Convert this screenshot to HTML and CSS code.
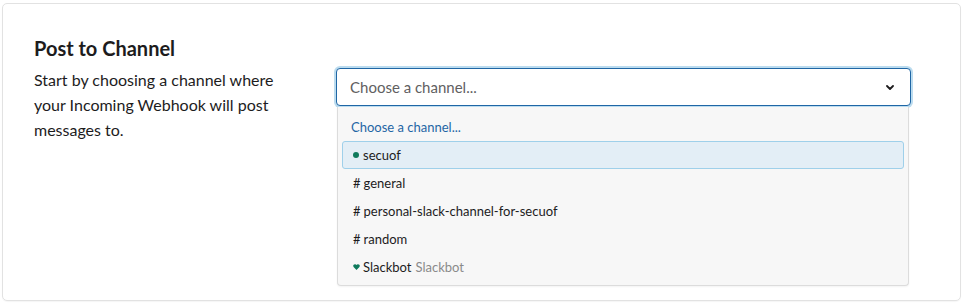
FILE: index.html
```html
<!DOCTYPE html>
<html lang="en">
<head>
  <meta charset="UTF-8">
  <title>Post to Channel</title>
  <link rel="stylesheet" href="styles.css">
</head>
<body>
  <div class="card">
    <div class="row">
      <div class="label-col">
        <h2>Post to Channel</h2>
        <p class="help">Start by choosing a channel where your Incoming Webhook will post messages to.</p>
      </div>

      <div class="select-col">
        <div class="select">
          <span class="placeholder">Choose a channel...</span>
          <svg class="chevron" width="8" height="5" viewBox="0 0 8 5">
            <path d="M1 1 L4 4 L7 1" fill="none" stroke="#1d1c1d" stroke-width="1.8" stroke-linecap="round" stroke-linejoin="round"/>
          </svg>
        </div>

        <ul class="menu">
          <li class="option prompt">Choose a channel...</li>
          <li class="option active"><span class="dot"></span>secuof</li>
          <li class="option"><span class="hash">#</span>general</li>
          <li class="option"><span class="hash">#</span>personal-slack-channel-for-secuof</li>
          <li class="option"><span class="hash">#</span>random</li>
          <li class="option">
            <svg class="heart" width="7" height="6" viewBox="0 0 8 7">
              <path d="M4 7 L0.6 3.4 A1.9 1.9 0 0 1 4 1.2 A1.9 1.9 0 0 1 7.4 3.4 Z" fill="#0f7a5c"/>
            </svg>Slackbot <span class="muted">Slackbot</span>
          </li>
        </ul>
      </div>
    </div>
  </div>
</body>
</html>
```

FILE: styles.css
```css
* {
  margin: 0;
  padding: 0;
  box-sizing: border-box;
}

body {
  font-family: Lato, 'Noto Sans', sans-serif;
  background: #fff;
  color: #1d1c1d;
  padding: 3px 7px 3px 2px;
}

.card {
  height: 298px;
  border: 1px solid #e2e2e2;
  border-radius: 5px;
  box-shadow: 0 1px 1px rgba(0, 0, 0, 0.04);
  padding: 32px 49px 0 31px;
}

.row {
  display: flex;
}

.label-col {
  width: 302px;
  flex-shrink: 0;
}

h2 {
  font-size: 20px;
  font-weight: 700;
  line-height: 24px;
  margin-bottom: 7px;
}

.help {
  font-size: 16px;
  line-height: 25px;
  width: 260px;
}

.select-col {
  flex: 1;
  padding-top: 32px;
}

.select {
  height: 38px;
  border: 1px solid #1f66a5;
  border-radius: 4px;
  box-shadow: 0 0 0 2px #bcdcef;
  display: flex;
  align-items: center;
  justify-content: space-between;
  padding: 0 16px 0 13px;
  background: #fff;
}

.placeholder {
  font-size: 15px;
  color: #616061;
}

.chevron {
  display: block;
}

.menu {
  list-style: none;
  margin: 1px 2px 0 1px;
  background: #f7f7f7;
  border: 1px solid #dcdcdc;
  border-top: none;
  border-radius: 0 0 4px 4px;
  padding: 6px 4px 4px;
  box-shadow: 0 1px 2px rgba(0, 0, 0, 0.05);
}

.option {
  font-size: 13px;
  height: 28px;
  line-height: 26px;
  padding: 0 11px 0 10px;
  border: 1px solid transparent;
  border-radius: 3px;
  display: flex;
  align-items: center;
}

.option.prompt {
  color: #1f66a5;
  padding-left: 8px;
}

.option.active {
  background: #e3eef6;
  border-color: #9fd0ea;
}

.dot {
  width: 6px;
  height: 6px;
  border-radius: 50%;
  background: #0f7a5c;
  margin-right: 4px;
}

.hash {
  margin-right: 3px;
}

.heart {
  margin-right: 3px;
}

.muted {
  color: #8a8a8a;
  margin-left: 4px;
}
```
